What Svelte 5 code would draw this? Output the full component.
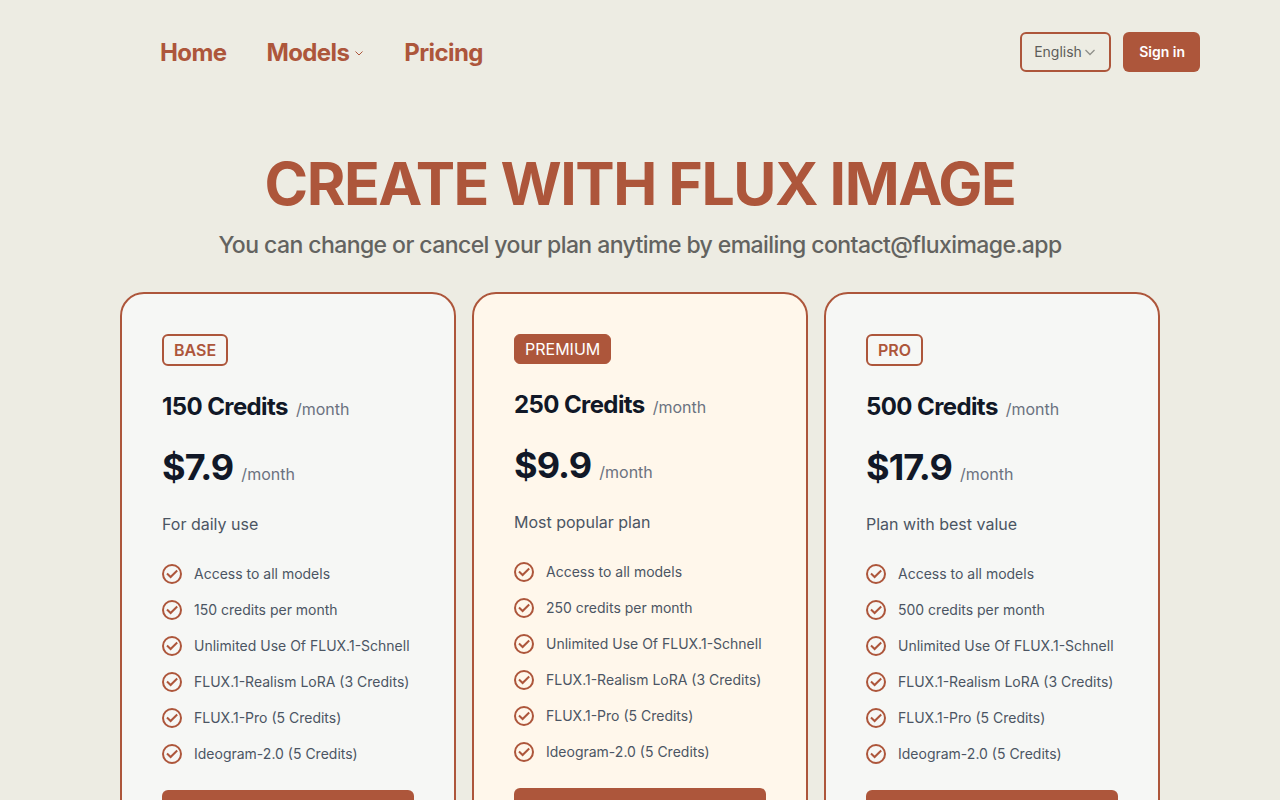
<script>
  const features = ['Unlimited Use Of FLUX.1-Schnell', 'FLUX.1-Realism LoRA (3 Credits)', 'FLUX.1-Pro (5 Credits)', 'Ideogram-2.0 (5 Credits)'];
  const plans = [
    { name: 'BASE', credits: 150, price: '$7.9', note: 'For daily use' },
    { name: 'PREMIUM', credits: 250, price: '$9.9', note: 'Most popular plan', featured: true },
    { name: 'PRO', credits: 500, price: '$17.9', note: 'Plan with best value' }
  ];
</script>

<header>
  <nav aria-label="Main">
    <a href="#home">Home</a>
    <button class="models" type="button">Models
      <svg width="10" height="10" viewBox="0 0 10 10" fill="none" stroke="currentColor" aria-hidden="true"><path d="m1.5 3.5 3.5 3.5 3.5-3.5" /></svg>
    </button>
    <a href="#pricing">Pricing</a>
  </nav>
  <div class="actions">
    <label class="language">
      <select aria-label="Language"><option>English</option></select>
      <svg width="12" height="12" viewBox="0 0 12 12" fill="none" stroke="#8f8f8a" stroke-width="1.3" aria-hidden="true"><path d="m1.5 4 4.500 4.500 4.500-4.500" /></svg>
    </label>
    <a class="signin" href="#signin">Sign in</a>
  </div>
</header>

<main>
  <h1>CREATE WITH FLUX IMAGE</h1>
  <p class="lead">You can change or cancel your plan anytime by emailing contact@fluximage.app</p>
  <div class="plans">
    {#each plans as plan}
      <section class="card" class:featured={plan.featured}>
        <h2 class="badge">{plan.name}</h2>
        <p class="credits"><strong>{plan.credits} Credits</strong><span>/month</span></p>
        <p class="price"><strong>{plan.price}</strong><span>/month</span></p>
        <p class="note">{plan.note}</p>
        <ul>
          {#each ['Access to all models', `${plan.credits} credits per month`, ...features] as feature}
            <li>
              <svg width="20" height="20" viewBox="0 0 20 20" fill="none" stroke="currentColor" stroke-width="2" aria-hidden="true"><circle cx="10" cy="10" r="9" /><path d="M5 9.500 8.600 13l6.600-6.500" /></svg>
              {feature}
            </li>
          {/each}
        </ul>
        <button class="buy" type="button">Subscribe</button>
      </section>
    {/each}
  </div>
</main>

<style>
  :global(body) { margin: 0; background: #edece3; font-family: Inter, "Liberation Sans", sans-serif; }
  header, header *, main, main * { box-sizing: border-box; }
  header { max-width: 1280px; margin: 0 auto; padding: 32px 80px 32px 160px; display: flex; justify-content: space-between; align-items: center; }
  nav, .actions { display: flex; align-items: center; }
  nav { gap: 40px; padding-top: 2px; }
  a { text-decoration: none; }
  button { font: inherit; cursor: pointer; }
  nav a, .models { color: #ad563b; font-size: 24px; line-height: 32px; font-weight: 700; letter-spacing: -0.025em; }
  .models { display: flex; align-items: center; gap: 5px; padding: 0; border: 0; background: none; }
  .actions { gap: 12px; }
  .language, .signin { height: 40px; display: flex; align-items: center; border-radius: 6px; font-size: 14px; line-height: 20px; }
  .language { gap: 2px; border: 2px solid #ad563b; padding: 0 13px 0 12px; color: #5d5d5a; }
  .language select { appearance: none; font: inherit; color: inherit; background: none; border: 0; padding: 0; cursor: pointer; }
  .signin { background: #ad563b; color: #fff; padding: 0 15px 0 16px; font-weight: 600; }
  main { max-width: 1040px; margin: 0 auto; padding-top: 48px; }
  h1, h2, p, ul { margin: 0; }
  h1 { color: #ad563b; text-align: center; font-size: 59px; line-height: 64px; font-weight: 700; letter-spacing: -0.025em; }
  .lead { text-align: center; color: #636360; font-size: 23px; line-height: 32px; font-weight: 500; margin-top: 13px; letter-spacing: -0.025em; }
  .plans { display: grid; grid-template-columns: repeat(3, 1fr); gap: 16px; margin-top: 31px; align-items: start; }
  .card { border: 2px solid #ad563b; border-radius: 24px; background: #f6f7f5; padding: 40px; }
  .featured { background: #fff7eb; }
  .badge { width: fit-content; border: 2px solid #ad563b; border-radius: 6px; padding: 2px 10px; font-size: 16px; line-height: 24px; color: #ad563b; font-weight: 600; }
  .featured .badge { border-width: 1px; background: #ad563b; color: #fff; font-weight: 400; }
  .credits, .price { display: flex; align-items: baseline; gap: 8px; color: #111827; }
  .credits { margin-top: 24px; line-height: 34px; }
  .credits strong { font-size: 24px; letter-spacing: -0.025em; }
  .price { margin-top: 21px; line-height: 40px; }
  .price strong { font-size: 36px; letter-spacing: -0.025em; }
  .credits span, .price span { font-size: 16px; color: #6b7280; }
  .note { color: #4b5563; font-size: 16px; line-height: 24px; margin-top: 18px; }
  ul { list-style: none; padding: 0; margin-top: 28px; display: grid; gap: 16px; }
  li { display: flex; align-items: center; gap: 12px; font-size: 14px; line-height: 20px; color: #4b5563; }
  li svg { color: #ad563b; flex: none; }
  .buy { width: 100%; height: 48px; margin-top: 26px; border: 0; border-radius: 6px; background: #ad563b; color: #fff; font-size: 14px; font-weight: 600; }
</style>
